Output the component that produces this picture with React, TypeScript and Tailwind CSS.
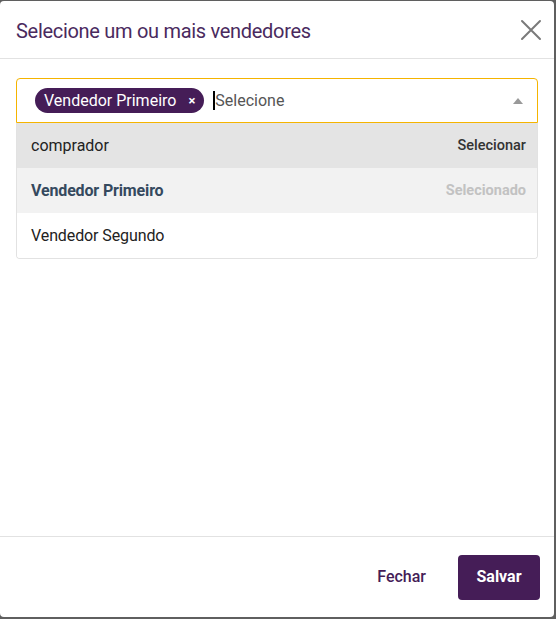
import React from "react";

export default function App() {
  return (
    <div className="w-[556px] h-[619px] bg-[#5f5f5f] pt-px pr-[2px] pb-[2px]" style={{ fontFamily: "Roboto, 'Liberation Sans', sans-serif" }}>
      <div className="h-full bg-white rounded-[4px] flex flex-col">
        <div className="h-[58px] flex items-center justify-between pl-4 pr-[12px] border-b border-[#e2e2e2]">
          <h1 className="text-[20px] text-[#4a2a5e] mt-[3px] tracking-[-0.3px]" style={{ fontFamily: "Roboto, sans-serif" }}>
            Selecione um ou mais vendedores
          </h1>
          <svg width="22" height="22" viewBox="0 0 22 22" className="mt-[1px]">
            <path d="M2 2 L20 20 M20 2 L2 20" stroke="#7a7a7a" strokeWidth="2" strokeLinecap="round" />
          </svg>
        </div>
        <div className="flex-1 px-4 pt-[19px]">
          <div className="h-[45px] border border-[#f5b400] rounded-t-[4px] flex items-center pl-[18px] pr-[14px]">
            <div className="h-[25px] bg-[#451d57] rounded-full flex items-center pl-[9px] pr-[9px] text-white text-[16px]">
              <span>Vendedor Primeiro</span>
              <span className="ml-[12px] text-[13px] font-bold leading-none">×</span>
            </div>
            <div className="ml-[9px] w-[2px] h-[19px] bg-black" />
            <span className="text-[16px] text-[#555]">Selecione</span>
            <div className="flex-1" />
            <svg width="10" height="6" viewBox="0 0 10 6">
              <path d="M0 6 L5 0 L10 6 Z" fill="#999" />
            </svg>
          </div>
          <div className="border border-t-0 border-[#e2e2e2] rounded-b-[4px] overflow-hidden">
            <div className="h-[45px] bg-[#e4e4e4] flex items-center justify-between pl-[14px] pr-[11px]">
              <span className="text-[16px] text-[#222]">comprador</span>
              <span className="text-[14.5px] font-medium text-[#333]">Selecionar</span>
            </div>
            <div className="h-[45px] bg-[#f2f2f2] flex items-center justify-between pl-[14px] pr-[11px]">
              <span className="text-[16px] font-bold text-[#35495e] tracking-[-0.15px]">Vendedor Primeiro</span>
              <span className="text-[14.5px] font-bold text-[#c2c2c2]">Selecionado</span>
            </div>
            <div className="h-[45px] bg-white flex items-center pl-[14px]">
              <span className="text-[16px] text-[#222] tracking-[-0.1px]">Vendedor Segundo</span>
            </div>
          </div>
        </div>
        <div className="h-[81px] border-t border-[#e2e2e2] flex items-center justify-end pr-[14px] gap-[32px]">
          <span className="text-[16px] font-medium text-[#451d57]">Fechar</span>
          <div className="w-[82px] h-[45px] bg-[#451d57] rounded-[4px] flex items-center justify-center text-white text-[16px] font-bold">
            Salvar
          </div>
        </div>
      </div>
    </div>
  );
}
